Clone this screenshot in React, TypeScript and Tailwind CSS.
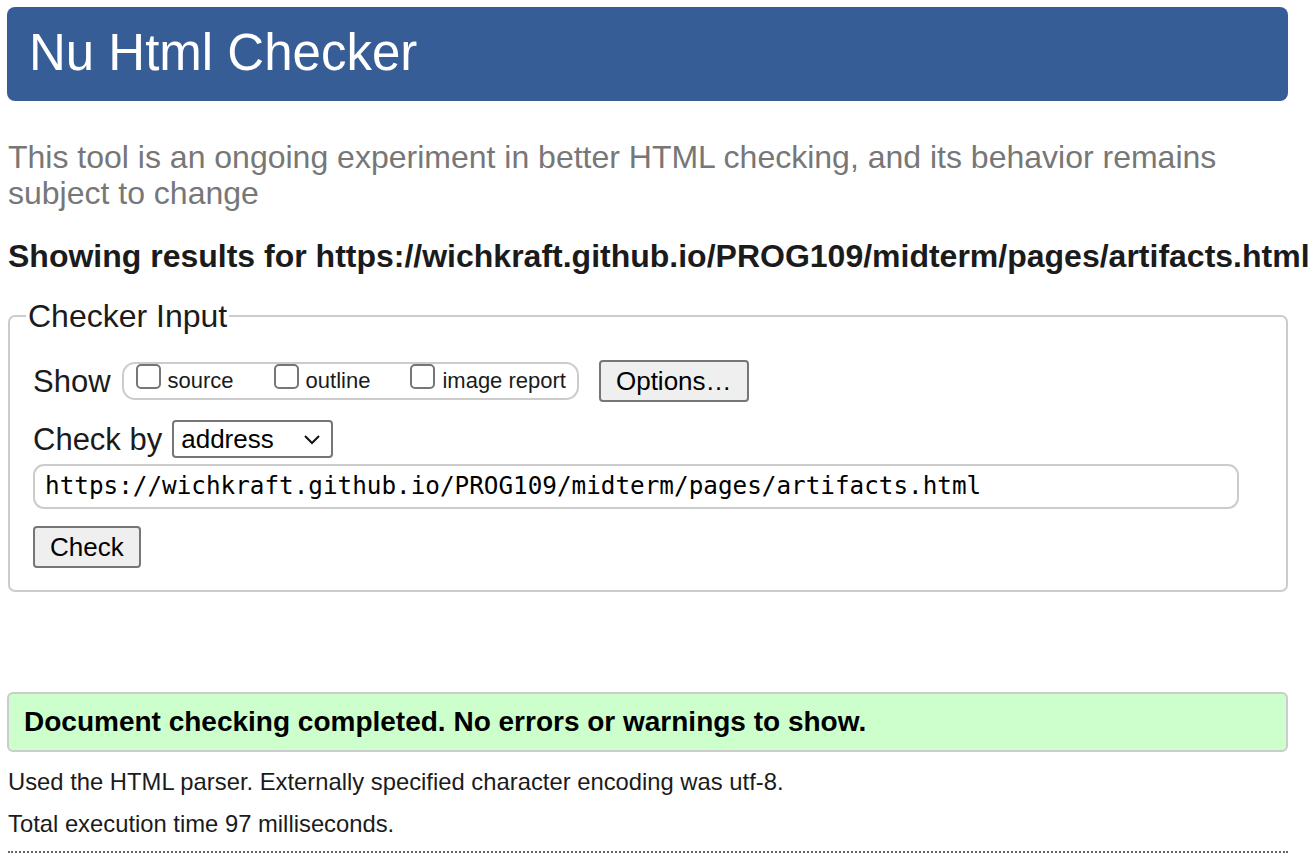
import React from "react";

const url = "https://wichkraft.github.io/PROG109/midterm/pages/artifacts.html";

const Box = ({ label }: { label: string }) => (
  <label className="flex items-end gap-[7px]">
    <input
      type="checkbox"
      className="appearance-none w-[25px] h-[25px] border-2 border-[#767676] rounded-[5px] bg-white mb-[3px]"
    />
    <span className="text-[22px] leading-none">{label}</span>
  </label>
);

const App = () => {
  return (
    <div
      className="min-h-screen bg-white text-[#1b1b1b] pl-[7px] pr-[28px] pt-[7px]"
      style={{ fontFamily: '"Liberation Sans", Arial, sans-serif' }}
    >
      <header className="h-[94px] bg-[#365d95] rounded-[8px] flex items-center pl-[22px]">
        <h1 className="text-white text-[51px] leading-none pb-[3px]">Nu Html Checker</h1>
      </header>

      <p className="mt-[38px] pl-[1px] text-[#777777] text-[32px] leading-[36px]">
        This tool is an ongoing experiment in better HTML checking, and its behavior remains subject to change
      </p>

      <h2 className="mt-[27px] pl-[1px] font-bold text-[32px] leading-[36px] whitespace-nowrap">
        Showing results for {url}
      </h2>

      <fieldset className="mt-[26px] ml-[1px] border-2 border-[#cccccc] rounded-[7px] pl-[23px] pr-[47px] pb-[22px]">
        <legend className="text-[32px] leading-none px-[2px] ml-[-7px]">Checker Input</legend>

        <div className="flex items-center mt-[28px]">
          <span className="text-[31px] leading-none">Show</span>
          <div className="ml-[11px] h-[38px] flex items-end gap-[40px] border-2 border-[#cccccc] rounded-[13px] pl-[12px] pr-[11px] pb-[6px]">
            <Box label="source" />
            <Box label="outline" />
            <Box label="image report" />
          </div>
          <button className="ml-[20px] h-[42px] px-[15px] bg-[#efefef] border-2 border-[#767676] rounded-[4px] text-[26px] leading-none text-black">
            Options…
          </button>
        </div>

        <div className="flex items-center mt-[18px]">
          <span className="text-[31px] leading-none">Check by</span>
          <div className="ml-[10px] w-[161px] h-[38px] border-2 border-[#767676] rounded-[4px] flex items-center justify-between pl-[7px] pr-[10px]">
            <span className="text-[26px] leading-none text-black">address</span>
            <svg width="18" height="12" viewBox="0 0 18 12" fill="none">
              <path d="M2 3l7 7 7-7" stroke="#111" strokeWidth="2" />
            </svg>
          </div>
        </div>

        <div
          className="mt-[6px] h-[45px] border-2 border-[#cccccc] rounded-[11px] flex items-center pl-[10px] text-[24.3px] text-black"
          style={{ fontFamily: '"DejaVu Sans Mono", monospace' }}
        >
          {url}
        </div>

        <button className="mt-[17px] h-[42px] px-[15px] bg-[#efefef] border-2 border-[#767676] rounded-[4px] text-[26px] leading-none text-black">
          Check
        </button>
      </fieldset>

      <div className="mt-[100px] h-[60px] bg-[#ccffcc] border-2 border-[#cccccc] rounded-[6px] flex items-center pl-[15px]">
        <span className="font-bold text-[28px] leading-none text-black">
          Document checking completed. No errors or warnings to show.
        </span>
      </div>

      <p className="mt-[16px] pl-[1px] text-[23.8px] leading-[28px]">
        Used the HTML parser. Externally specified character encoding was utf-8.
      </p>
      <p className="mt-[14px] pl-[1px] text-[23.8px] leading-[28px]">Total execution time 97 milliseconds.</p>

      <div className="mt-[13px] ml-[1px] border-t-2 border-dotted border-[#666666]" />
    </div>
  );
};

export default App;
